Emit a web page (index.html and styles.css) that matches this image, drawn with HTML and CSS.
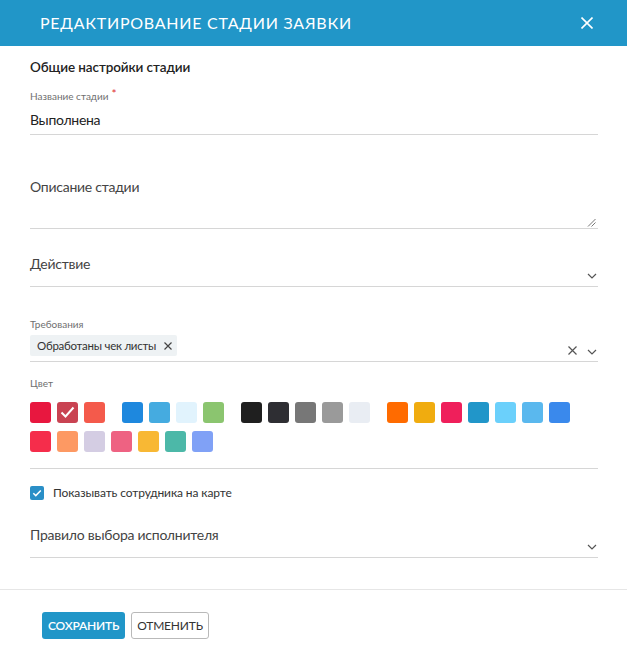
FILE: index.html
```html
<!DOCTYPE html>
<html lang="ru">
<head>
<meta charset="utf-8">
<title>Редактирование стадии заявки</title>
<link rel="stylesheet" href="styles.css">
</head>
<body>
<div class="modal">
  <header class="modal-header">
    <h1 class="modal-title">Редактирование стадии заявки</h1>
    <button class="close-btn" aria-label="Закрыть">
      <svg width="12" height="12" viewBox="0 0 12 12"><path d="M0.5 0.5 L11.5 11.5 M11.5 0.5 L0.5 11.5" stroke="#fff" stroke-width="1.6" fill="none"/></svg>
    </button>
  </header>

  <div class="modal-body">
    <h2 class="section-title">Общие настройки стадии</h2>

    <div class="field field-name">
      <div class="label">Название стадии<span class="req">*</span></div>
      <div class="value">Выполнена</div>
    </div>

    <div class="field field-desc">
      <div class="placeholder">Описание стадии</div>
      <svg class="resize" width="9" height="9" viewBox="0 0 9 9"><path d="M1 8.5 L8.5 1 M4.5 8.5 L8.5 4.5" stroke="#777" stroke-width="1" fill="none"/></svg>
    </div>

    <div class="field field-select">
      <div class="placeholder">Действие</div>
      <svg class="chevron" width="10" height="6" viewBox="0 0 10 6"><path d="M1 1 L5 5 L9 1" stroke="#555" stroke-width="1.2" fill="none"/></svg>
    </div>

    <div class="field field-req">
      <div class="label">Требования</div>
      <div class="chips-row">
        <span class="chip">Обработаны чек листы<svg class="chip-x" width="8" height="8" viewBox="0 0 8 8"><path d="M0.5 0.5 L7.5 7.5 M7.5 0.5 L0.5 7.5" stroke="#444" stroke-width="1.2" fill="none"/></svg></span>
        <span class="spacer"></span>
        <svg class="clear-x" width="9" height="9" viewBox="0 0 9 9"><path d="M0.5 0.5 L8.5 8.5 M8.5 0.5 L0.5 8.5" stroke="#555" stroke-width="1.2" fill="none"/></svg>
        <svg class="chevron" width="10" height="6" viewBox="0 0 10 6"><path d="M1 1 L5 5 L9 1" stroke="#555" stroke-width="1.2" fill="none"/></svg>
      </div>
    </div>

    <div class="field field-color">
      <div class="label">Цвет</div>
      <div class="swatch-row">
        <div class="swatch-group">
          <span class="swatch" style="background:#e8173f"></span>
          <span class="swatch selected" style="background:#c94352"><svg width="21" height="21" viewBox="0 0 21 21"><path d="M4.5 10.5 L8.5 14.5 L16.5 5.5" stroke="#fff" stroke-width="2" fill="none"/></svg></span>
          <span class="swatch" style="background:#f45a4b"></span>
        </div>
        <div class="swatch-group">
          <span class="swatch" style="background:#1e88de"></span>
          <span class="swatch" style="background:#45abe0"></span>
          <span class="swatch" style="background:#e1f3fd"></span>
          <span class="swatch" style="background:#8bc56f"></span>
        </div>
        <div class="swatch-group">
          <span class="swatch" style="background:#1f1f1f"></span>
          <span class="swatch" style="background:#2e2e33"></span>
          <span class="swatch" style="background:#777777"></span>
          <span class="swatch" style="background:#9a9a9a"></span>
          <span class="swatch" style="background:#e9edf3"></span>
        </div>
        <div class="swatch-group">
          <span class="swatch" style="background:#ff6b00"></span>
          <span class="swatch" style="background:#f0ac0f"></span>
          <span class="swatch" style="background:#ef1f5b"></span>
          <span class="swatch" style="background:#2196c9"></span>
          <span class="swatch" style="background:#6bd0fb"></span>
          <span class="swatch" style="background:#5ab8ee"></span>
          <span class="swatch" style="background:#3a89ec"></span>
        </div>
      </div>
      <div class="swatch-row row-2">
        <div class="swatch-group">
          <span class="swatch" style="background:#f52d4b"></span>
          <span class="swatch" style="background:#fd9963"></span>
          <span class="swatch" style="background:#d4cde3"></span>
          <span class="swatch" style="background:#ee6282"></span>
          <span class="swatch" style="background:#f8b834"></span>
          <span class="swatch" style="background:#4cb8a8"></span>
          <span class="swatch" style="background:#80a1f6"></span>
        </div>
      </div>
    </div>

    <label class="check-row">
      <span class="checkbox"><svg width="14" height="14" viewBox="0 0 14 14"><path d="M3.3 7.2 L5.8 9.6 L10.8 4.4" stroke="#fff" stroke-width="1.5" fill="none"/></svg></span>
      <span class="check-label">Показывать сотрудника на карте</span>
    </label>

    <div class="field field-select field-rule">
      <div class="placeholder">Правило выбора исполнителя</div>
      <svg class="chevron" width="10" height="6" viewBox="0 0 10 6"><path d="M1 1 L5 5 L9 1" stroke="#555" stroke-width="1.2" fill="none"/></svg>
    </div>
  </div>

  <footer class="modal-footer">
    <button class="btn btn-primary">Сохранить</button>
    <button class="btn btn-default">Отменить</button>
  </footer>
</div>
</body>
</html>
```

FILE: styles.css
```css
html, body {
  margin: 0;
  padding: 0;
  background: #fff;
}

body {
  font-family: "Lato", "Roboto", "Noto Sans", sans-serif;
  color: #333;
}

.modal {
  width: 627px;
}

.modal-header {
  height: 46px;
  background: #2196c8;
  display: flex;
  align-items: center;
  justify-content: space-between;
  padding: 0 34px 0 40px;
  box-sizing: border-box;
}

.modal-title {
  margin: 0;
  font-size: 16px;
  line-height: 24px;
  font-weight: 400;
  text-transform: uppercase;
  color: #fff;
  letter-spacing: 0.75px;
}

.close-btn {
  border: 0;
  background: none;
  padding: 0;
  width: 12px;
  height: 12px;
  display: flex;
  margin-top: -1px;
}

.modal-body {
  padding: 12px 29px 31px 30px;
}

.section-title {
  margin: 0;
  font-size: 13.5px;
  line-height: 18px;
  font-weight: 600;
  color: #222;
  letter-spacing: -0.1px;
}

.field {
  border-bottom: 1px solid #d6d6d6;
}

.label {
  font-size: 10px;
  line-height: 14px;
  color: #6f6f6f;
}

.req {
  color: #e0312f;
  font-size: 12px;
  margin-left: 3px;
  vertical-align: top;
  line-height: 10px;
}

.field-name {
  margin-top: 13px;
  padding-bottom: 4px;
}

.value {
  margin-top: 7px;
  font-size: 14px;
  line-height: 20px;
  color: #222;
  letter-spacing: -0.3px;
}

.placeholder {
  font-size: 14px;
  line-height: 20px;
  color: #444;
  flex: 1;
  letter-spacing: -0.25px;
}

.field-desc {
  margin-top: 42px;
  height: 51px;
  display: flex;
  align-items: flex-start;
}

.resize {
  align-self: flex-end;
  margin: 0 2px 1px 0;
}

.field-select {
  margin-top: 25px;
  min-height: 32px;
  display: flex;
  align-items: flex-start;
}

.field-select .chevron {
  align-self: flex-end;
  margin: 0 1px 7px 0;
}

.field-req {
  margin-top: 30px;
  padding-bottom: 5px;
}

.chips-row {
  margin-top: 4px;
  display: flex;
  align-items: flex-end;
}

.chip {
  display: inline-flex;
  align-items: center;
  height: 21px;
  padding: 0 5px 0 7px;
  background: #eef2f4;
  font-size: 11.5px;
  color: #333;
  border-radius: 2px;
  letter-spacing: -0.25px;
}

.chip-x {
  margin-left: 8px;
}

.spacer {
  flex: 1;
}

.clear-x {
  margin-bottom: 1px;
}

.chips-row .chevron {
  margin: 0 1px 1px 10px;
}

.field-color {
  margin-top: 14px;
  padding-bottom: 16px;
}

.swatch-row {
  margin-top: 12px;
  display: flex;
  gap: 17px;
}

.swatch-row.row-2 {
  margin-top: 8px;
}

.swatch-group {
  display: flex;
  gap: 6px;
}

.swatch {
  width: 21px;
  height: 21px;
  border-radius: 3px;
  display: block;
}

.swatch svg {
  display: block;
}

.check-row {
  margin-top: 16px;
  display: flex;
  align-items: center;
  gap: 9px;
}

.checkbox {
  width: 14px;
  height: 14px;
  background: #2a8fc7;
  border-radius: 2px;
  display: block;
}

.checkbox svg {
  display: block;
}

.check-label {
  font-size: 12px;
  line-height: 16px;
  color: #333;
  letter-spacing: -0.1px;
}

.field-rule {
  margin-top: 24px;
}

.modal-footer {
  border-top: 1px solid #e6e6e6;
  padding: 22px 0 0 42px;
  display: flex;
  gap: 6px;
}

.btn {
  height: 27px;
  border-radius: 3px;
  font-family: "Lato", "Roboto", sans-serif;
  font-size: 12px;
  text-transform: uppercase;
  padding: 0;
  letter-spacing: -0.2px;
}

.btn-primary {
  width: 83px;
  background: #2196c8;
  border: 0;
  color: #fff;
  font-weight: 600;
}

.btn-default {
  width: 78px;
  background: #fff;
  border: 1px solid #b9b9b9;
  color: #333;
}
```
